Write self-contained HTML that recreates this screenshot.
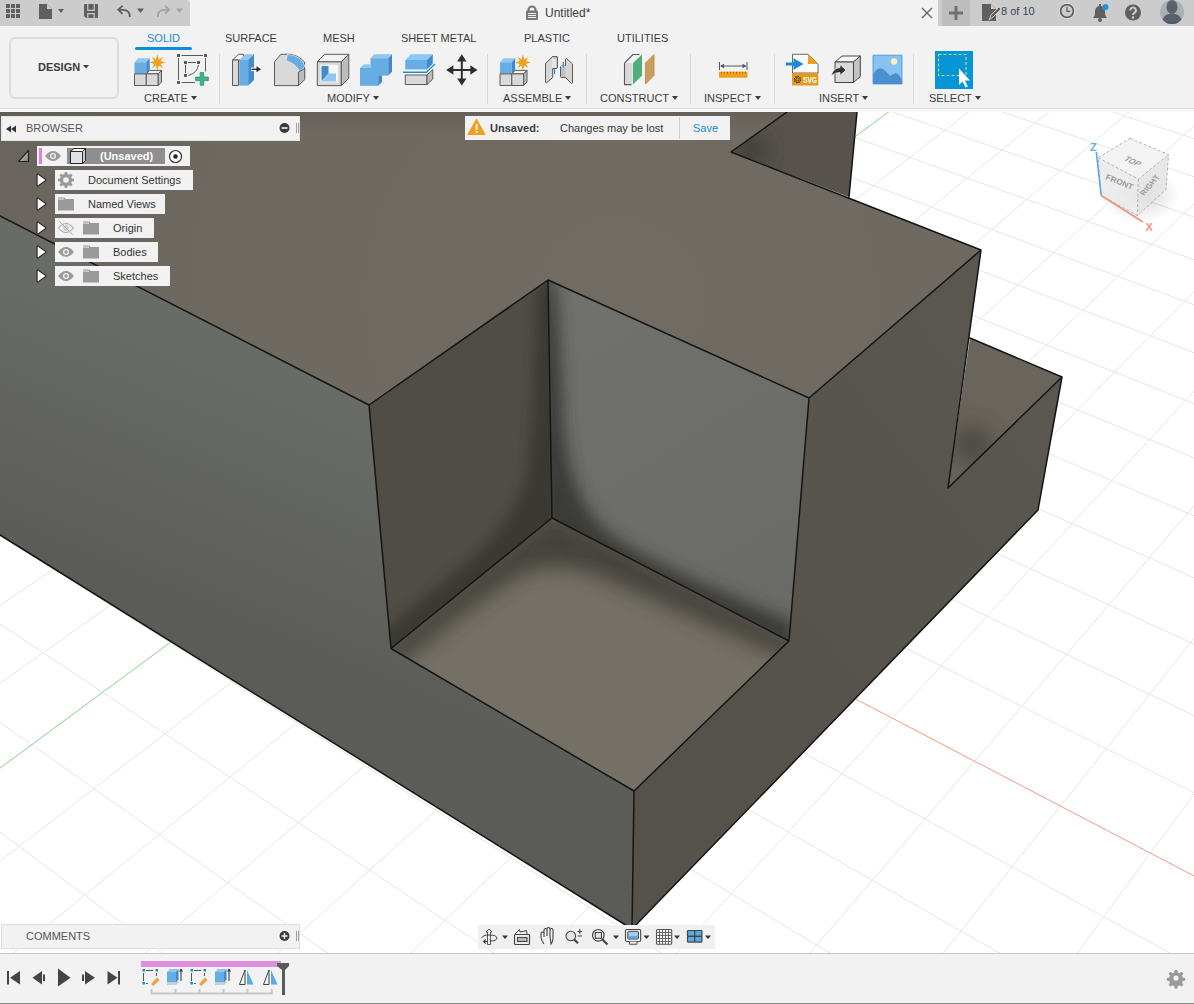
<!DOCTYPE html>
<html><head><meta charset="utf-8">
<style>
*{box-sizing:border-box;margin:0;padding:0}
html,body{width:1194px;height:1004px;overflow:hidden;background:#fff;font-family:"Liberation Sans",sans-serif;color:#3c3c3c}
.abs{position:absolute}
#top{left:0;top:0;width:1194px;height:26px;background:#f2f2f2}
#qa{left:0;top:0;width:190px;height:26px;background:#cccccc;border-top-right-radius:3px}
#tr{left:938px;top:0;width:256px;height:26px;background:#cccccc}
#ribbon{left:0;top:26px;width:1194px;height:83px;background:#f2f2f2;border-bottom:1px solid #dcdcdc}
#strip{left:0;top:109px;width:1194px;height:3px;background:#f9f9f9}
#vp{left:0;top:112px;width:1194px;height:841px;overflow:hidden}
#tl{left:0;top:953px;width:1194px;height:51px;background:#f2f2f2;border-top:1px solid #c8c8c8}
.tab{font-size:11px;color:#3c3c3c;top:32px}
.lbl{font-size:11px;color:#3c3c3c;top:92px}
.sep{width:1px;background:#d8d8d8;top:54px;height:50px}
.tri{display:inline-block;width:0;height:0;border-left:3px solid transparent;border-right:3px solid transparent;border-top:4px solid #3c3c3c;margin-left:3px;vertical-align:2px}
.br{font-size:11px;line-height:12px;color:#333;white-space:nowrap}
.bx{background:#f2f2f2}
.tab,.lbl{line-height:12px;white-space:nowrap}
</style></head><body>
<div id="top" class="abs"></div>
<div id="qa" class="abs"></div>
<div id="tr" class="abs"></div>
<!-- quick access icons -->
<svg class="abs" style="left:0;top:0" width="190" height="26">
 <g fill="#5f5f5f">
  <rect x="6" y="4" width="4" height="4"/><rect x="11" y="4" width="4" height="4"/><rect x="16" y="4" width="4" height="4"/>
  <rect x="6" y="9" width="4" height="4"/><rect x="11" y="9" width="4" height="4"/><rect x="16" y="9" width="4" height="4"/>
  <rect x="6" y="14" width="4" height="4"/><rect x="11" y="14" width="4" height="4"/><rect x="16" y="14" width="4" height="4"/>
  <path d="M39 4h8l5 5v10h-13z"/><path d="M47 4v5h5z" fill="#cccccc"/>
  <path d="M58 9h6l-3 4z"/>
  <path d="M85 4H97Q98 4 98 5V17Q98 18 97 18H86L84 16V5Q84 4 85 4Z"/><path d="M87.8 4V10.3H94.2V4M87.8 18V13.6H94.2V18" fill="none" stroke="#cccccc" stroke-width="1.2"/>
  <path d="M122.5 5.8L118.3 9.8L122.5 13.8M118.8 9.8H123Q129.8 9.8 129.8 17" fill="none" stroke="#5f5f5f" stroke-width="1.8"/>
  <path d="M137 8.5h7l-3.5 4.5z"/>
 </g>
 <g fill="#a3a3a3">
  <path d="M165 5.8L169.2 9.8L165 13.8M168.7 9.8H164.5Q157.7 9.8 157.7 17" fill="none" stroke="#a3a3a3" stroke-width="1.8"/>
  <path d="M176 8.5h7l-3.5 4.5z"/>
 </g>
</svg>
<!-- title -->
<svg class="abs" style="left:524;top:4" width="16" height="18"><path d="M4.5 7.5V6a3.5 3.5 0 0 1 7 0V7.5" fill="none" stroke="#777" stroke-width="2.2"/><rect x="2" y="6.5" width="12" height="9.5" rx="1" fill="#777"/><g stroke="#f2f2f2" stroke-width="1"><line x1="4" y1="9.5" x2="12" y2="9.5"/><line x1="4" y1="11.5" x2="12" y2="11.5"/><line x1="4" y1="13.5" x2="12" y2="13.5"/></g></svg>
<div class="abs txt" style="left:545px;top:6px;font-size:12px;color:#3c3c3c">Untitled*</div>
<svg class="abs" style="left:920;top:6" width="14" height="14"><path d="M2 2L12 12M12 2L2 12" stroke="#666" stroke-width="1.4"/></svg>
<div class="abs" style="left:942px;top:0;width:28px;height:26px;background:#bdbdbd;border-radius:2px 2px 0 0"></div>
<svg class="abs" style="left:942;top:0" width="28" height="26"><path d="M14 6v14M7 13h14" stroke="#707070" stroke-width="3"/></svg>
<svg class="abs" style="left:980;top:1" width="20" height="22"><path d="M2 3h9l5 5v12h-14z" fill="#5f5f5f"/><path d="M11 3v5h5z" fill="#cccccc"/><path d="M9 19l2-5l8-8l2 2l-8 8z" fill="#5f5f5f" stroke="#cccccc" stroke-width="1"/></svg>
<div class="abs txt" style="left:1001px;top:5px;font-size:11px;color:#34455a">8 of 10</div>
<svg class="abs" style="left:1058;top:2" width="20" height="20"><circle cx="9" cy="9" r="7.6" fill="none" stroke="#f2f2f2" stroke-width="0.8"/><circle cx="9" cy="9" r="6.4" fill="none" stroke="#5f5f5f" stroke-width="1.8"/><path d="M9 5v4.3h3.2" fill="none" stroke="#5f5f5f" stroke-width="1.3"/></svg>
<svg class="abs" style="left:1090;top:3" width="22" height="20"><path d="M3 15c2-2 2-4 2-7a5 5 0 0 1 10 0c0 3 0 5 2 7z" fill="#5f5f5f"/><circle cx="10" cy="17" r="2" fill="#5f5f5f"/><rect x="9" y="1" width="2" height="3" fill="#5f5f5f"/><circle cx="15.5" cy="4" r="3" fill="#1e90e0"/></svg>
<svg class="abs" style="left:1124;top:3" width="20" height="20"><circle cx="9" cy="9.5" r="8" fill="#5f5f5f"/><path d="M6.3 7.5a2.8 2.8 0 1 1 4 2.4c-1 .5-1.3 1-1.3 2" fill="none" stroke="#cccccc" stroke-width="2"/><circle cx="9" cy="14.5" r="1.2" fill="#cccccc"/></svg>
<svg class="abs" style="left:1159;top:0" width="26" height="26"><defs><clipPath id="av"><circle cx="13" cy="12" r="12"/></clipPath></defs><circle cx="13" cy="12" r="12" fill="#a9b0b4"/><g clip-path="url(#av)"><ellipse cx="13" cy="7" rx="5.5" ry="7" fill="#5b6168"/><path d="M2 24Q3 14 13 13.5Q23 14 24 24z" fill="#5b6168"/><rect x="0" y="21.5" width="26" height="5" fill="#4a5a80"/></g></svg>
<div id="ribbon" class="abs"></div>
<div class="abs" style="left:9px;top:37px;width:110px;height:62px;border:2px solid #dcdcdc;border-radius:6px"></div>
<div class="abs" style="left:38px;top:61px;font-size:11px;font-weight:bold;color:#3c3c3c;line-height:12px">DESIGN</div>
<svg class="abs" style="left:83;top:65" width="7" height="4"><path d="M0 0h6l-3 3.5z" fill="#3c3c3c"/></svg>
<div class="abs tab" style="left:147px;color:#1a8ad4">SOLID</div>
<div class="abs" style="left:135px;top:47px;width:57px;height:3px;border-radius:2px;background:#0a8fd8"></div>
<div class="abs tab" style="left:225px">SURFACE</div>
<div class="abs tab" style="left:323px">MESH</div>
<div class="abs tab" style="left:401px">SHEET METAL</div>
<div class="abs tab" style="left:524px">PLASTIC</div>
<div class="abs tab" style="left:617px">UTILITIES</div>
<div class="abs lbl" style="left:144px">CREATE<span class="tri"></span></div>
<div class="abs lbl" style="left:327px">MODIFY<span class="tri"></span></div>
<div class="abs lbl" style="left:503px">ASSEMBLE<span class="tri"></span></div>
<div class="abs lbl" style="left:600px">CONSTRUCT<span class="tri"></span></div>
<div class="abs lbl" style="left:704px">INSPECT<span class="tri"></span></div>
<div class="abs lbl" style="left:819px">INSERT<span class="tri"></span></div>
<div class="abs lbl" style="left:929px">SELECT<span class="tri"></span></div>
<div class="abs sep" style="left:219px"></div>
<div class="abs sep" style="left:487px"></div>
<div class="abs sep" style="left:586px"></div>
<div class="abs sep" style="left:690px"></div>
<div class="abs sep" style="left:774px"></div>
<div class="abs sep" style="left:913px"></div>
<svg class="abs" style="left:0;top:0" width="1194" height="108" id="ricons">
<defs>
<g id="ol"></g>
</defs>
<g stroke-linejoin="round">
<!-- new component -->
<path d="M134.5 62.3L138.3 58.3H149.7L146.3 62.3Z" fill="#8ec8f2"/>
<rect x="134.5" y="62.3" width="11.8" height="11.6" fill="#67ade4"/>
<path d="M146.3 62.3L149.7 58.3V70.5L146.3 73.9Z" fill="#3f8bcc"/>
<path d="M134.5 73.9H146.3V85.5H134.5Z" fill="#d9d9d9" stroke="#5a5a5a" stroke-width="1"/>
<path d="M146.3 73.9L149.7 70.4H161.5L158.2 73.9Z" fill="#eeeeee" stroke="#5a5a5a" stroke-width="1"/>
<path d="M146.3 73.9H158.2V85.5H146.3Z" fill="#d9d9d9" stroke="#5a5a5a" stroke-width="1"/>
<path d="M158.2 73.9L161.5 70.4V82L158.2 85.5Z" fill="#bcbcbc" stroke="#5a5a5a" stroke-width="1"/>
<path d="M157.4 54.5L158.9 59.4L163.1 56.8L160.5 61L165.4 62.5L160.5 64L163.1 68.2L158.9 65.6L157.4 70.5L155.9 65.6L151.7 68.2L154.3 64L149.4 62.5L154.3 61L151.7 56.8L155.9 59.4Z" fill="#f0a01c"/>
<!-- sketch -->
<g fill="#5a5a5a"><rect x="177" y="54" width="3" height="3"/><rect x="204" y="54" width="3" height="3"/><rect x="177" y="81" width="3" height="3"/><rect x="184" y="61" width="3" height="3"/><rect x="197" y="61" width="3" height="3"/><rect x="184" y="74" width="3" height="3"/></g>
<g stroke="#5a5a5a" stroke-width="1" fill="none"><path d="M181.5 55.5H203M178.5 58V80M181.5 82.5H195M205.5 58V71.5M188 62.5H196M185.5 65V73M198.5 65Q197 73 188.5 75.5"/></g>
<path d="M200.2 72.5h3.5v4.6h4.6v3.5h-4.6v4.6h-3.5v-4.6h-4.6v-3.5h4.6z" fill="#4cb07a" stroke="#17968a" stroke-width="0.8"/>
<!-- press pull -->
<path d="M232.5 60L238.5 54.3H243.5V60Z" fill="#f4f4f4" stroke="#5a5a5a" stroke-width="1"/>
<rect x="232.5" y="60" width="6" height="25.5" fill="#d9d9d9" stroke="#5a5a5a" stroke-width="1"/>
<path d="M239.2 60L245 54.3H254L248.2 60Z" fill="#8ec8f2"/>
<rect x="239.2" y="60" width="9" height="25.6" fill="#67ade4"/>
<path d="M248.2 60L254 54.3V80L248.2 85.6Z" fill="#3f8bcc"/>
<rect x="251" y="67.5" width="6" height="3.6" fill="#fff"/>
<path d="M251.5 69.3H257" stroke="#2b2b2b" stroke-width="1.4"/><path d="M256.5 66.3L261 69.3L256.5 72.3Z" fill="#2b2b2b"/>
<!-- fillet -->
<path d="M274.5 61.8L280.8 54.3H290.5Q299 56 304.5 62V77.5L298.5 85.6H274.5Z" fill="#d9d9d9" stroke="#5a5a5a" stroke-width="1"/>
<path d="M287.5 54.3Q302 56 305 66.5L299.5 71.5Q297 64.5 286 60.5Z" fill="#67ade4" stroke="#f2f2f2" stroke-width="0.6"/>
<path d="M298.5 72V85.6L304.8 79.5V68.5Z" fill="#bcbcbc" stroke="#5a5a5a" stroke-width="1"/>
<!-- shell -->
<path d="M317.3 61.8L324.5 54.3H348.8L341.3 61.8Z" fill="#f4f4f4" stroke="#5a5a5a" stroke-width="1"/>
<rect x="317.3" y="61.8" width="24" height="23.8" fill="#d9d9d9" stroke="#5a5a5a" stroke-width="1"/>
<path d="M341.3 61.8L348.8 54.3V78.3L341.3 85.6Z" fill="#bcbcbc" stroke="#5a5a5a" stroke-width="1"/>
<rect x="320.5" y="64.8" width="17.5" height="17.5" fill="#f7f7f7"/>
<path d="M321.5 66H328.5V73.5L321.5 81Z" fill="#3f8bcc"/>
<path d="M328.5 73.5H336V81.5H321.5Z" fill="#8ec8f2"/>
<!-- combine -->
<path d="M370.5 58.2L374.2 54.3H392L388.3 58.2Z" fill="#8ec8f2"/>
<rect x="370.5" y="58.2" width="17.8" height="17.4" fill="#67ade4"/>
<path d="M388.3 58.2L392 54.3V71.8L388.3 75.6Z" fill="#3f8bcc"/>
<path d="M360 68L363.7 64.2H370.5V68Z" fill="#8ec8f2"/>
<rect x="360" y="68" width="18.2" height="17.8" fill="#67ade4"/>
<path d="M378.2 75.6H382V82L378.2 85.8Z" fill="#3f8bcc"/>
<!-- split -->
<path d="M405.3 60L410.8 54.3H432.8L427 60Z" fill="#8ec8f2"/>
<rect x="405.3" y="60" width="21.7" height="9.4" fill="#67ade4"/>
<path d="M427 60L432.8 54.3V63.8L427 69.4Z" fill="#3f8bcc"/>
<path d="M403 72.3H426.5L435 64" fill="none" stroke="#fff" stroke-width="3"/>
<path d="M403 72.3H426.5L435 64" fill="none" stroke="#1a8ad4" stroke-width="1.4"/>
<path d="M405.3 75H427V84.5H405.3Z" fill="#d9d9d9" stroke="#5a5a5a" stroke-width="1"/>
<path d="M427 75L432.8 69.5V79L427 84.5Z" fill="#bcbcbc" stroke="#5a5a5a" stroke-width="1"/>
<!-- move -->
<g fill="#2e2e2e"><path d="M461.8 54.3L466.5 61.5H457.1Z"/><path d="M461.8 85.6L466.5 78.4H457.1Z"/><path d="M446.2 70L453.4 65.3V74.7Z"/><path d="M477.5 70L470.3 65.3V74.7Z"/><rect x="460.8" y="60" width="2" height="20"/><rect x="452" y="69" width="19.6" height="2"/></g>
<!-- assemble new component -->
<path d="M500 62.3L503.8 58.3H515.2L511.8 62.3Z" fill="#8ec8f2"/>
<rect x="500" y="62.3" width="11.8" height="11.6" fill="#67ade4"/>
<path d="M511.8 62.3L515.2 58.3V70.5L511.8 73.9Z" fill="#3f8bcc"/>
<path d="M500 73.9H511.8V85.5H500Z" fill="#d9d9d9" stroke="#5a5a5a" stroke-width="1"/>
<path d="M511.8 73.9L515.2 70.4H527L523.7 73.9Z" fill="#eeeeee" stroke="#5a5a5a" stroke-width="1"/>
<path d="M511.8 73.9H523.7V85.5H511.8Z" fill="#d9d9d9" stroke="#5a5a5a" stroke-width="1"/>
<path d="M523.7 73.9L527 70.4V82L523.7 85.5Z" fill="#bcbcbc" stroke="#5a5a5a" stroke-width="1"/>
<path d="M522.9 54.5L524.4 59.4L528.6 56.8L526 61L530.9 62.5L526 64L528.6 68.2L524.4 65.6L522.9 70.5L521.4 65.6L517.2 68.2L519.8 64L514.9 62.5L519.8 61L517.2 56.8L521.4 59.4Z" fill="#f0a01c"/>
<!-- joint -->
<g stroke="#5a5a5a" stroke-width="1" stroke-linejoin="round">
<path d="M545.5 63.5L552.3 56.8H557.3V67.5Q557.3 68.5 555 68.5H552.7V77.5L546.5 82.8Q545.5 83 545.5 82Z" fill="#d6d6d6"/>
<path d="M552 57V68.3H557.3V57.2Z" fill="#e6e6e6" stroke="none"/>
<path d="M557.3 57V67.5Q557.3 68.5 555 68.5H552.7M545.5 63.5L552.3 56.8H557.3" fill="none"/>
<ellipse cx="554.8" cy="58.2" rx="1.6" ry="0.8" fill="#bbb" stroke="none"/>
<path d="M572.5 64V83L571.5 83.5L565.5 77.5H561.5Q560.5 77.5 560.5 76.5V67Q560.5 66 561.5 66H565.5V59L566.5 58.5Z" fill="#d6d6d6"/>
<path d="M561 67H565.3V77H561Z" fill="#c2c2c2" stroke="none"/>
<path d="M560.8 66.5Q563 65.2 565.4 66.5" fill="none" stroke="#eee" stroke-width="1"/>
</g>
<path d="M554.5 69V74M563.3 62V67.5" stroke="#1a8ad4" stroke-width="1.2"/>
<!-- plane -->
<path d="M624.5 63.1H632.5V84.6H624.5Z" fill="#d9d9d9"/>
<path d="M624.5 63.1L633 54.5H640" fill="none" stroke="#f8f8f8" stroke-width="0"/>
<path d="M624.5 63.1L633 54.5H639.5M624.5 63.1V84.6H631.5" fill="none" stroke="#5a5a5a" stroke-width="1.1"/>
<path d="M633 63.1L642 54.4V75.6L633 84.6Z" fill="#4cb07a"/>
<path d="M645.5 63.1L654 54.6V75.4L645.5 84Z" fill="#c89e62" stroke="#c8883e" stroke-width="0.9"/>
<!-- measure -->
<path d="M719.5 62V70M747 62V70" stroke="#555" stroke-width="1"/>
<path d="M721 66H745.5" stroke="#555" stroke-width="1"/>
<path d="M720 66L724 63.8V68.2ZM746.5 66L742.5 63.8V68.2Z" fill="#555"/>
<rect x="719" y="71.7" width="28.5" height="6" fill="#f0a01c"/>
<path d="M721.5 71.7v2M724.5 71.7v2M727.5 71.7v2M730.5 71.7v2M733.5 71.7v2M736.5 71.7v2M739.5 71.7v2M742.5 71.7v2M745.5 71.7v2" stroke="#a86a00" stroke-width="0.8"/>
<!-- insert svg -->
<path d="M792.5 54.3H808L818 64V73H792.5Z" fill="#fafafa" stroke="#5a5a5a" stroke-width="0.9"/>
<path d="M808 54.3L818 64H808Z" fill="#f0a01c"/>
<rect x="792" y="73" width="26.3" height="12.5" fill="#e39a1e"/>
<circle cx="797.5" cy="79.5" r="3" fill="none" stroke="#222" stroke-width="1.3" stroke-dasharray="1.3 1"/><circle cx="797.5" cy="79.5" r="1.6" fill="#e39a1e" stroke="#222" stroke-width="0.6"/>
<text x="803" y="83" font-family="Liberation Sans" font-weight="bold" font-size="9" fill="#fff" textLength="14" lengthAdjust="spacingAndGlyphs">SVG</text>
<path d="M786 64H795" stroke="#1a8ad4" stroke-width="3"/><path d="M793.5 58.3L803.5 64L793.5 69.8Z" fill="#1a8ad4"/>
<!-- insert mesh -->
<path d="M835 62L842 56H860.3L853.5 62Z" fill="#fafafa" stroke="#444" stroke-width="1"/>
<rect x="835" y="62" width="18.5" height="20.5" fill="#dadada" stroke="#444" stroke-width="1"/>
<path d="M853.5 62L860.3 56V76.5L853.5 82.5Z" fill="#c4c4c4" stroke="#444" stroke-width="1"/>
<path d="M831 76Q833 68 840 67.5V64.5L846 70L840 75.5V72.5Q835 72.5 831 76Z" fill="#333" stroke="#f2f2f2" stroke-width="0.8"/>
<!-- canvas -->
<rect x="873" y="55.2" width="29" height="28.8" fill="#86c3f0" stroke="#4a90cf" stroke-width="0.8"/>
<path d="M873.2 84V74Q878 66 883 69Q887 72 890 76Q893 74 896 73Q899 74 902 80V84Z" fill="#4a90cf"/>
<circle cx="894" cy="61.5" r="3.2" fill="#f6efc0"/>
<!-- select -->
<rect x="935" y="51" width="38" height="38" fill="#0696d7"/>
<rect x="938.5" y="54.5" width="27.5" height="21" fill="none" stroke="#b7e07a" stroke-width="1.2" stroke-dasharray="3 2"/>
<path d="M959 68.5V85L962.6 81.5L965.5 87.5L967.8 86.4L965 80.5H970Z" fill="#fff"/>
</g>
</svg>
<div id="strip" class="abs"></div>
<div id="vp" class="abs">
<svg width="1194" height="841" viewBox="0 112 1194 841" style="position:absolute;left:0;top:0">
<path d="M1106.7 110.0L1196.0 139.3 M996.6 110.0L1196.0 177.4 M887.2 110.0L1196.0 217.7 M778.5 110.0L1196.0 260.4 M670.4 110.0L1196.0 305.5 M563.1 110.0L1196.0 353.5 M456.5 110.0L1196.0 404.4 M350.5 110.0L1196.0 458.7 M245.3 110.0L1196.0 516.6 M140.7 110.0L1196.0 578.6 M36.7 110.0L1196.0 645.1 M-2.0 141.0L1196.0 716.6 M-2.0 193.7L1196.0 793.6 M-2.0 312.5L1173.6 955.0 M-2.0 379.8L1002.9 955.0 M-2.0 453.2L833.2 955.0 M-2.0 533.8L664.6 955.0 M-2.0 622.6L497.0 955.0 M-2.0 721.0L330.4 955.0 M-2.0 830.4L164.9 955.0 M-2.0 953.1L0.4 955.0 M20.7 110.0L-2.0 121.2 M99.2 110.0L-2.0 161.5 M177.8 110.0L-2.0 204.5 M256.6 110.0L-2.0 250.3 M335.5 110.0L-2.0 299.3 M414.5 110.0L-2.0 351.9 M493.6 110.0L-2.0 408.5 M572.9 110.0L-2.0 469.4 M652.3 110.0L-2.0 535.3 M731.8 110.0L-2.0 606.8 M811.4 110.0L-2.0 684.6 M971.1 110.0L-2.0 862.8 M1051.1 110.0L10.9 955.0 M1131.3 110.0L143.3 955.0 M1196.0 124.1L275.8 955.0 M1196.0 201.8L408.6 955.0 M1196.0 289.5L541.6 955.0 M1196.0 389.2L674.8 955.0 M1196.0 503.5L808.2 955.0 M1196.0 635.9L941.8 955.0 M1196.0 791.1L1075.7 955.0" stroke="#e5e5e5" stroke-width="1" fill="none"/>
<path d="M-2 250.7L1196 876.9" stroke="#f39a86" stroke-width="1"/>
<path d="M891.2 110L-2 769.6" stroke="#86d486" stroke-width="1"/>
<g id="model">
<defs>
 <filter id="b6" x="-50%" y="-50%" width="200%" height="200%"><feGaussianBlur stdDeviation="6"/></filter>
 <filter id="b10" x="-50%" y="-50%" width="200%" height="200%"><feGaussianBlur stdDeviation="10"/></filter>
 <filter id="b8" x="-50%" y="-50%" width="200%" height="200%"><feGaussianBlur stdDeviation="8"/></filter>
 <filter id="b20" x="-50%" y="-50%" width="200%" height="200%"><feGaussianBlur stdDeviation="22"/></filter>
 <clipPath id="cTop"><polygon points="0,112 787,112 731,152 981,250 809,398 548,280 369,405 0,216"/></clipPath>
 <clipPath id="cFL"><polygon points="0,216 369,405 391,648.5 634,791 632,929 0,535"/></clipPath>
 <clipPath id="cFR"><polygon points="809,398 981,250 948,488 1062,377 1038,510 632,929 634,791 789,641"/></clipPath>
 <clipPath id="cLW"><polygon points="369,405 548,280 552,518 391,648.5"/></clipPath>
 <clipPath id="cRW"><polygon points="548,280 809,398 789,641 552,518"/></clipPath>
 <clipPath id="cFl"><polygon points="391,648.5 552,518 789,641 634,791"/></clipPath>
 <clipPath id="cNW"><polygon points="731,152 787,112 857,112 849,197"/></clipPath>
 <clipPath id="cST"><polygon points="970,338 1062,377 948,488"/></clipPath>
 <radialGradient id="gTop" gradientUnits="userSpaceOnUse" cx="620" cy="300" r="760"><stop offset="0" stop-color="#716c63"/><stop offset="0.45" stop-color="#6e6961"/><stop offset="1" stop-color="#67635c"/></radialGradient>
 <linearGradient id="gTopBand" x1="0" y1="0" x2="0" y2="1"><stop offset="0" stop-color="#000" stop-opacity="0.09"/><stop offset="1" stop-color="#000" stop-opacity="0"/></linearGradient>
 <linearGradient id="gFL" gradientUnits="userSpaceOnUse" x1="330" y1="400" x2="230" y2="640"><stop offset="0" stop-color="#696b66"/><stop offset="1" stop-color="#5b5c57"/></linearGradient>
 <linearGradient id="gFR" gradientUnits="userSpaceOnUse" x1="700" y1="700" x2="1050" y2="420"><stop offset="0" stop-color="#55524c"/><stop offset="1" stop-color="#5a5751"/></linearGradient>
 <linearGradient id="gRW" gradientUnits="userSpaceOnUse" x1="600" y1="320" x2="790" y2="620"><stop offset="0" stop-color="#70716d"/><stop offset="1" stop-color="#6a6b67"/></linearGradient>
</defs>
<g stroke="none">
<polygon fill="url(#gTop)" points="0,112 787,112 731,152 981,250 809,398 548,280 369,405 0,216"/>
<rect x="0" y="112" width="860" height="22" fill="url(#gTopBand)" clip-path="url(#cTop)"/>
<polygon fill="#57534c" points="731,152 787,112 857,112 849,197"/>
<g clip-path="url(#cNW)"><circle cx="752" cy="150" r="16" fill="#3c3a35" filter="url(#b10)" opacity="0.8"/></g>
<polygon fill="url(#gFL)" points="0,216 369,405 391,648.5 634,791 632,929 0,535"/>
<polygon fill="url(#gFR)" points="809,398 981,250 948,488 1062,377 1038,510 632,929 634,791 789,641"/>
<polygon fill="#69645c" points="970,338 1062,377 948,488"/>
<g clip-path="url(#cST)"><circle cx="972" cy="445" r="20" fill="#4a4741" filter="url(#b10)" opacity="0.85"/></g>
<polygon fill="#504c46" points="369,405 548,280 552,518 391,648.5"/>
<g clip-path="url(#cLW)"><path d="M547 270L560 280V530L391 660L380 635L470 560Q522 515 528 465Q534 420 536 300Z" fill="#393732" filter="url(#b6)" opacity="0.9"/></g>
<polygon fill="url(#gRW)" points="548,280 809,398 789,641 552,518"/>
<g clip-path="url(#cRW)"><path d="M540 270L555 285Q560 330 563 420Q568 495 605 530Q650 565 790 620L800 660L540 535Z" fill="#393834" filter="url(#b8)" opacity="0.95"/></g>
<polygon fill="#747065" points="391,648.5 552,518 789,641 634,791"/>
<g clip-path="url(#cFl)"><path d="M380 650L551 510L800 640L790 660Q700 620 620 585Q560 555 520 575Q470 605 400 665Z" fill="#3c3a35" filter="url(#b10)" opacity="0.85"/></g>
</g>
<path fill="none" stroke="#141414" stroke-width="1.5" stroke-linejoin="round" stroke-linecap="round" d="M0 216L369 405L548 280L809 398L981 250L731 152L787 112M857 112L849 197M369 405L391 648.5L552 518L548 280M552 518L789 641L809 398M391 648.5L634 791L789 641M634 791L632 929L0 535M632 929L1038 510L1062 377L970 338M1062 377L948 488L981 250"/>
</g>
</svg>
</div>
<!-- browser panel -->
<div class="abs" style="left:1px;top:116px;width:299px;height:25px;background:#f2f2f2;border:1px solid #e4e4e4"></div>
<svg class="abs" style="left:0;top:112" width="310" height="30"><path d="M6 17L11 13.5V20.5ZM11 17L16 13.5V20.5Z" fill="#333"/><circle cx="284.5" cy="16" r="5" fill="#3a3a3a"/><rect x="281.5" y="15.2" width="6" height="1.6" fill="#f2f2f2"/><path d="M296.5 11V21M298.5 11V21" stroke="#888" stroke-width="0.8"/></svg>
<div class="abs br" style="left:26px;top:122px;color:#555">BROWSER</div>
<div class="abs bx" style="left:37px;top:146px;width:153px;height:20px"></div>
<div class="abs" style="left:39px;top:148px;width:3px;height:16px;background:#e07fe0"></div>
<div class="abs" style="left:67px;top:148px;width:98px;height:16px;background:#8e8e8e"></div>
<div class="abs" style="left:100px;top:150px;font-size:11px;font-weight:bold;color:#fff;line-height:12px">(Unsaved)</div>
<div class="abs bx" style="left:55px;top:170px;width:138px;height:20px"></div>
<div class="abs bx" style="left:55px;top:194px;width:110px;height:20px"></div>
<div class="abs bx" style="left:55px;top:218px;width:99px;height:20px"></div>
<div class="abs bx" style="left:55px;top:242px;width:103px;height:20px"></div>
<div class="abs bx" style="left:55px;top:266px;width:115px;height:20px"></div>
<div class="abs br" style="left:88px;top:174px">Document Settings</div>
<div class="abs br" style="left:88px;top:198px">Named Views</div>
<div class="abs br" style="left:113px;top:222px">Origin</div>
<div class="abs br" style="left:113px;top:246px">Bodies</div>
<div class="abs br" style="left:113px;top:270px">Sketches</div>
<svg class="abs" style="left:0;top:140" width="200" height="150">
 <defs><linearGradient id="tg" x1="0" y1="0" x2="1" y2="1"><stop offset="0" stop-color="#eee"/><stop offset="1" stop-color="#777"/></linearGradient></defs>
 <path d="M18.5 21.5L28.5 10.5V21.5Z" fill="url(#tg)" stroke="#222" stroke-width="1.2" stroke-linejoin="round"/>
 <g fill="#9a9a9a"><path d="M45 16Q53 6 61 16Q53 26 45 16Z"/></g><circle cx="53" cy="16" r="3" fill="#f2f2f2"/><circle cx="53" cy="16" r="1.7" fill="#9a9a9a"/>
 <path d="M70.5 11.5L74 8.5H85.5V20.5L82.5 23.5H70.5Z" fill="#dfe3e6" stroke="#222" stroke-width="1"/><path d="M82.5 11.5H70.5M82.5 11.5L85.5 8.5M82.5 11.5V23.5" fill="none" stroke="#222" stroke-width="1"/><path d="M74 8.5H85.5L82.5 11.5H70.5Z" fill="#fafafa" stroke="#222" stroke-width="0.9"/><path d="M82.5 11.5L85.5 8.5V20.5L82.5 23.5Z" fill="#c9ccce" stroke="#222" stroke-width="0.9"/>
 <circle cx="175.5" cy="16.5" r="6" fill="#fafafa" stroke="#333" stroke-width="1.2"/><circle cx="175.5" cy="16.5" r="2.2" fill="#222"/>
 <g fill="#f4f4f4" stroke="#333" stroke-width="1.3" stroke-linejoin="round">
  <path d="M37 34.5Q37 33.5 38 34.0L45.5 39.2Q46.5 40.0 45.5 40.8L38 46.0Q37 46.5 37 45.5Z"/><path d="M37 58.5Q37 57.5 38 58.0L45.5 63.2Q46.5 64.0 45.5 64.8L38 70.0Q37 70.5 37 69.5Z"/><path d="M37 82.5Q37 81.5 38 82.0L45.5 87.2Q46.5 88.0 45.5 88.8L38 94.0Q37 94.5 37 93.5Z"/><path d="M37 106.5Q37 105.5 38 106.0L45.5 111.2Q46.5 112.0 45.5 112.8L38 118.0Q37 118.5 37 117.5Z"/><path d="M37 130.5Q37 129.5 38 130.0L45.5 135.2Q46.5 136.0 45.5 136.8L38 142.0Q37 142.5 37 141.5Z"/>
 </g>
 <g fill="#9a9a9a">
  <path d="M64.8 32h2.4l.4 2.1 1.4.6 1.8-1.2 1.7 1.7-1.2 1.8.6 1.4 2.1.4v2.4l-2.1.4-.6 1.4 1.2 1.8-1.7 1.7-1.8-1.2-1.4.6-.4 2.1h-2.4l-.4-2.1-1.4-.6-1.8 1.2-1.7-1.7 1.2-1.8-.6-1.4-2.1-.4v-2.4l2.1-.4.6-1.4-1.2-1.8 1.7-1.7 1.8 1.2 1.4-.6z"/>
  <path d="M58 57.5h6.5l1 1.5H74V70.5H58Z"/>
  <path d="M83 81.5h6.5l1 1.5H99V94.5H83Z"/>
  <path d="M83 105.5h6.5l1 1.5H99V118.5H83Z"/>
  <path d="M83 129.5h6.5l1 1.5H99V142.5H83Z"/>
  <path d="M58 112Q66 102 74 112Q66 122 58 112Z"/><path d="M58 136Q66 126 74 136Q66 146 58 136Z"/>
 </g>
 <circle cx="66" cy="40" r="2.8" fill="#f2f2f2"/>
 <g fill="#f2f2f2"><rect x="58" y="58.6" width="6" height="0.9"/><rect x="83" y="82.6" width="6" height="0.9"/><rect x="83" y="106.6" width="6" height="0.9"/><rect x="83" y="130.6" width="6" height="0.9"/><circle cx="66" cy="112" r="3"/><circle cx="66" cy="136" r="3"/></g>
 <g fill="#9a9a9a"><circle cx="66" cy="112" r="1.7"/><circle cx="66" cy="136" r="1.7"/></g>
 <path d="M58.5 88Q66 79 73.5 88Q66 97 58.5 88Z" fill="none" stroke="#aaa" stroke-width="1.1"/><circle cx="66" cy="88" r="2.2" fill="none" stroke="#aaa" stroke-width="1"/><path d="M59.5 81.5L72.5 94.5" stroke="#aaa" stroke-width="1"/>
</svg>
<!-- notification -->
<div class="abs" style="left:465px;top:116px;width:265px;height:24px;background:#f2f2f2"></div>
<div class="abs" style="left:679px;top:117px;width:1px;height:22px;background:#d0d0d0"></div>
<svg class="abs" style="left:467;top:118" width="20" height="18"><path d="M9.5 1.5L18 16.5H1Z" fill="#f0a01c" stroke="#f0a01c" stroke-width="1.2" stroke-linejoin="round"/><rect x="8.7" y="6" width="1.8" height="6" fill="#fff"/><rect x="8.7" y="13" width="1.8" height="1.8" fill="#fff"/></svg>
<div class="abs br" style="left:490px;top:122px;font-weight:bold;color:#3c3c3c">Unsaved:</div>
<div class="abs br" style="left:560px;top:122px">Changes may be lost</div>
<div class="abs br" style="left:693px;top:122px;color:#1a8ad4">Save</div>
<!-- view cube -->
<svg class="abs" style="left:1080;top:125" width="100" height="115">
 <defs><radialGradient id="sh" cx="0.5" cy="0.5" r="0.5"><stop offset="0" stop-color="#000" stop-opacity="0.16"/><stop offset="1" stop-color="#000" stop-opacity="0"/></radialGradient></defs>
 <ellipse cx="60" cy="70" rx="40" ry="28" fill="url(#sh)"/>
 <g transform="translate(-1080,-125)" stroke-linejoin="round">
 <path d="M1130 138.4L1168.6 154.6L1138.3 179.1L1098.1 157.7Z" fill="#f1f1f1" fill-opacity="0.88"/>
 <path d="M1098.1 157.7L1138.3 179.1L1137.3 215.7L1101.2 195.3Z" fill="#ebebeb" fill-opacity="0.88"/>
 <path d="M1138.3 179.1L1168.6 154.6L1166 189.6L1137.3 215.7Z" fill="#e4e4e4" fill-opacity="0.88"/>
 <path d="M1130 138.4L1168.6 154.6L1166 189.6L1137.3 215.7L1101.2 195.3L1098.1 157.7Z" fill="none" stroke="#9a9a9a" stroke-width="0.7" stroke-dasharray="3 2"/>
 <path d="M1098.1 157.7L1138.3 179.1L1168.6 154.6M1138.3 179.1L1137.3 215.7" fill="none" stroke="#9a9a9a" stroke-width="0.7" stroke-dasharray="3 2"/>
 <text transform="translate(1123,160) rotate(24) skewX(-25)" font-family="Liberation Sans" font-size="8" fill="#9c9c9c" font-weight="bold">TOP</text>
 <text transform="translate(1105,179) rotate(22)" font-family="Liberation Sans" font-size="8" fill="#9c9c9c" font-weight="bold" textLength="29" lengthAdjust="spacingAndGlyphs">FRONT</text>
 <text transform="translate(1144,196) rotate(-50) skewX(12)" font-family="Liberation Sans" font-size="7.5" fill="#9c9c9c" font-weight="bold" textLength="25" lengthAdjust="spacingAndGlyphs">RIGHT</text>
 <path d="M1101.2 195.5L1096.3 152" stroke="#5aa8e6" stroke-width="1.6"/>
 <path d="M1101.2 195.5L1143 222" stroke="#f09580" stroke-width="1.8"/>
 <text x="1090" y="150.5" font-family="Liberation Sans" font-size="11" font-weight="bold" fill="#6aaee8">Z</text>
 <text x="1145.5" y="230.5" font-family="Liberation Sans" font-size="11" font-weight="bold" fill="#f09580">X</text>
 </g>
</svg>
<!-- comments -->
<div class="abs" style="left:1px;top:924px;width:299px;height:25px;background:#f2f2f2;border:1px solid #dedede"></div>
<div class="abs br" style="left:26px;top:930px;color:#555">COMMENTS</div>
<svg class="abs" style="left:270;top:924" width="34" height="25"><circle cx="14.5" cy="12" r="5" fill="#3a3a3a"/><path d="M11.5 12h6M14.5 9v6" stroke="#f2f2f2" stroke-width="1.5"/><path d="M26.5 7V17M28.5 7V17" stroke="#888" stroke-width="0.8"/></svg>
<!-- nav bar -->
<div class="abs" style="left:478px;top:925px;width:237px;height:24px;background:#f0f0f0"></div>
<svg class="abs" style="left:475;top:920" width="245" height="32">
 <g fill="none" stroke="#444" stroke-width="1.1">
  <path d="M12.5 24.5V12H11L14 9L17 12H15.5V24.5Z" fill="#f0f0f0" stroke-width="0.9"/><path d="M6.5 18Q8 15 14 15Q21.5 15 22 18Q21.5 21 15.5 21" stroke-width="1"/><path d="M9 21.5H12.5M10.8 19.5L8.5 21.5L10.8 23.5" stroke-width="1.2"/>
  <rect x="39.5" y="14.5" width="15" height="10" rx="1" stroke-width="1.2"/><rect x="42.5" y="17.5" width="9.5" height="4" fill="#bbb" stroke-width="1.1"/><path d="M40 14L44.5 9.5L45 12L50 11L51.5 10.5L52 14" stroke-width="1"/>
  <path d="M69 24Q66 20 66 17V13.5Q66 12 67.5 12Q69 12 69 13.5V17M69 17V10Q69 8.5 70.5 8.5Q72 8.5 72 10V16M72 16V9Q72 7.5 73.5 7.5Q75 7.5 75 9V16M75 16V10Q75 8.5 76.5 8.5Q78 8.5 78 10V17Q78 22 76 24Z"/>
  <circle cx="95.8" cy="16" r="4.8" fill="#e4e4e4" stroke-width="1.1"/><path d="M99.2 19.5L103 23.3" stroke-width="2.2"/><path d="M102.5 11.5H107M104.8 9V14M102.5 16H107"/>
  <circle cx="123.3" cy="15.3" r="5.8" stroke-width="1.2"/><rect x="120.3" y="12.5" width="6.2" height="5.8" fill="#e4e4e4" stroke-width="1.1"/><path d="M127.5 19.5L132.5 24.5" stroke-width="2.2"/>
  <rect x="150.5" y="9.5" width="15.2" height="12" rx="1.2" fill="#fafafa" stroke-width="1.1"/><path d="M154.5 21.7V24.2H162V21.7" fill="#fafafa" stroke-width="1"/>
 </g>
 <rect x="152.8" y="11.3" width="10.6" height="7.8" rx="0.8" fill="#a9c9e6" stroke="#444" stroke-width="1"/><rect x="153.3" y="16.3" width="9.6" height="2.2" fill="#5aa0dc"/>
 <rect x="181.5" y="9.5" width="15.2" height="14.8" rx="1" fill="#fff" stroke="#555" stroke-width="1.1"/>
 <path d="M184.5 9.5V24.3M187.5 9.5V24.3M190.5 9.5V24.3M193.5 9.5V24.3M181.5 12.5H196.7M181.5 15.5H196.7M181.5 18.5H196.7M181.5 21.5H196.7" stroke="#666" stroke-width="1.1"/>
 <g fill="#5aa8e4" stroke="#444" stroke-width="1.2"><rect x="212.5" y="10.5" width="7.2" height="5.8" rx="0.8"/><rect x="219.7" y="10.5" width="7.2" height="5.8" rx="0.8"/><rect x="212.5" y="16.3" width="7.2" height="5.8" rx="0.8"/><rect x="219.7" y="16.3" width="7.2" height="5.8" rx="0.8"/></g>
 <g fill="#333"><path d="M27 15.5h6l-3 3.5z"/><path d="M138 15.5h6l-3 3.5z"/><path d="M168.5 15.5h6l-3 3.5z"/><path d="M199 15.5h6l-3 3.5z"/><path d="M230 15.5h6l-3 3.5z"/></g>
</svg>
<div id="tl" class="abs"></div>
<svg class="abs" style="left:0;top:953" width="1194" height="51">
 <g fill="#444">
  <rect x="7" y="18" width="2" height="13.5"/><path d="M20 18V31.5L10 24.7Z"/>
  <path d="M32.5 24.7L42 18V31.5Z"/><rect x="43" y="21.5" width="2" height="6.5"/>
  <path d="M58 15.5L70.5 24.7L58 33.5Z"/>
  <rect x="82" y="21.5" width="2" height="6.5"/><path d="M85 18V31.5L95 24.7Z"/>
  <path d="M107.5 18V31.5L117.5 24.7Z"/><rect x="118" y="18" width="2" height="13.5"/>
 </g>
 <rect x="141" y="8" width="140" height="6" fill="#e08ee0"/>
 <path d="M151.5 36V40.5H271.8V36M175.5 36V40M199.5 36V40M223.5 36V40M247.5 36V40" fill="none" stroke="#c8c8c8" stroke-width="2"/>
 <path d="M277 10H289V13L285 17V42H282V17L277 13Z" fill="#5a5a5a"/>
 <g stroke="#444" stroke-width="0.9" fill="none"><path d="M146 17.5H153M143.5 20V28M146 30.5H148M156.5 20V23"/><path d="M194 17.5H201M191.5 20V28M194 30.5H196M204.5 20V23"/></g>
 <g fill="#1a8ad4"><rect x="142.5" y="16" width="2.5" height="2.5"/><rect x="155.5" y="16" width="2.5" height="2.5"/><rect x="142.5" y="29" width="2.5" height="2.5"/><rect x="190.5" y="16" width="2.5" height="2.5"/><rect x="203.5" y="16" width="2.5" height="2.5"/><rect x="190.5" y="29" width="2.5" height="2.5"/></g>
 <path d="M151 31L157 24.5L159.5 27L153.5 33Z" fill="#f0a040"/><path d="M199 31L205 24.5L207.5 27L201.5 33Z" fill="#f0a040"/>
 <g>
  <path d="M167 19L169.5 16H178.5L176 19Z" fill="#8ec8f2"/><rect x="167" y="19" width="9" height="10.5" fill="#67ade4"/><path d="M176 19L178.5 16V26.5L176 29.5Z" fill="#3f8bcc"/><path d="M167 31H176L178.5 28.5" fill="none" stroke="#c4c4c4" stroke-width="1.5"/>
  <path d="M181 16V28" stroke="#333" stroke-width="1"/><path d="M179 18.5L181 15.5L183 18.5Z" fill="#333"/>
  <path d="M215 19L217.5 16H226.5L224 19Z" fill="#8ec8f2"/><rect x="215" y="19" width="9" height="10.5" fill="#67ade4"/><path d="M224 19L226.5 16V26.5L224 29.5Z" fill="#3f8bcc"/><path d="M215 31H224L226.5 28.5" fill="none" stroke="#c4c4c4" stroke-width="1.5"/>
  <path d="M229 16V28" stroke="#333" stroke-width="1"/><path d="M227 18.5L229 15.5L231 18.5Z" fill="#333"/>
 </g>
 <path d="M239.5 31.5L245 17V31.5Z" fill="none" stroke="#444" stroke-width="1"/><path d="M247 17L253.5 31.5H247Z" fill="#5aaae4"/>
 <path d="M263.5 31.5L269 17V31.5Z" fill="none" stroke="#444" stroke-width="1"/><path d="M271 17L277.5 31.5H271Z" fill="#5aaae4"/>
 <g transform="translate(1176,25)"><path d="M-1.3-8h2.6l.5 2.5 1.7.7 2.1-1.4 1.8 1.8-1.4 2.1.7 1.7 2.5.5v2.6l-2.5.5-.7 1.7 1.4 2.1-1.8 1.8-2.1-1.4-1.7.7-.5 2.5h-2.6l-.5-2.5-1.7-.7-2.1 1.4-1.8-1.8 1.4-2.1-.7-1.7-2.5-.5v-2.6l2.5-.5.7-1.7-1.4-2.1 1.8-1.8 2.1 1.4 1.7-.7z" fill="#999"/><circle r="2.6" fill="#f2f2f2"/></g>
 <rect x="0" y="50" width="1194" height="1" fill="#8a8a8a"/>
</svg>

</body></html>
